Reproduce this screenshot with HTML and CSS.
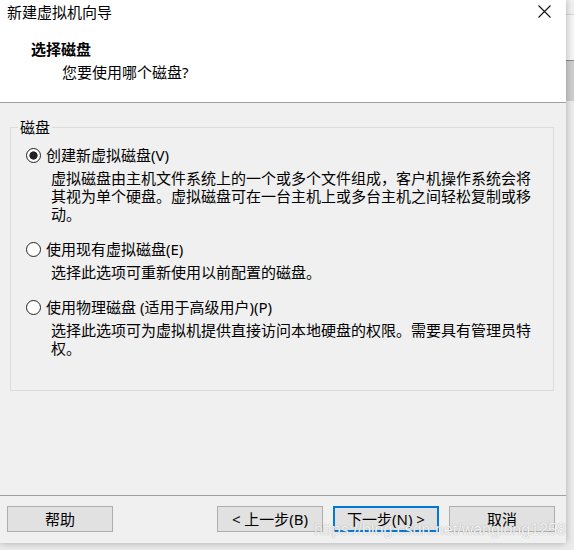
FILE: index.html
```html
<!DOCTYPE html>
<html lang="zh-CN">
<head>
<meta charset="utf-8">
<title>新建虚拟机向导</title>
<link rel="stylesheet" href="styles.css">
</head>
<body>
<div class="dialog">
  <div class="header">
    <div class="titlebar">
      <span class="title">新建虚拟机向导</span>
      <svg class="close" width="13" height="13" viewBox="0 0 13 13" aria-hidden="true">
        <path d="M0.5 0.5 L12.5 12.5 M12.5 0.5 L0.5 12.5" stroke="#111" stroke-width="1.1" fill="none"/>
      </svg>
    </div>
    <div class="h-title">选择磁盘</div>
    <div class="h-sub">您要使用哪个磁盘?</div>
  </div>

  <div class="main">
    <fieldset class="group">
      <legend>磁盘</legend>
      <div class="option">
        <div class="opt-row"><span class="radio checked"></span><span>创建新虚拟磁盘(V)</span></div>
        <div class="desc">虚拟磁盘由主机文件系统上的一个或多个文件组成，客户机操作系统会将其视为单个硬盘。虚拟磁盘可在一台主机上或多台主机之间轻松复制或移动。</div>
      </div>
      <div class="option">
        <div class="opt-row"><span class="radio"></span><span>使用现有虚拟磁盘(E)</span></div>
        <div class="desc">选择此选项可重新使用以前配置的磁盘。</div>
      </div>
      <div class="option">
        <div class="opt-row"><span class="radio"></span><span>使用物理磁盘 (适用于高级用户)(P)</span></div>
        <div class="desc">选择此选项可为虚拟机提供直接访问本地硬盘的权限。需要具有管理员特权。</div>
      </div>
    </fieldset>
  </div>

  <div class="footer">
    <button class="btn">帮助</button>
    <div class="nav">
      <button class="btn">&lt; 上一步(B)</button>
      <button class="btn default">下一步(N) &gt;</button>
      <button class="btn">取消</button>
    </div>
  </div>

  <div class="watermark">https://blog.csdn.net/wanglong1258</div>
</div>
</body>
</html>
```

FILE: styles.css
```css
html, body {
  margin: 0;
  padding: 0;
}
body {
  width: 574px;
  height: 550px;
  overflow: hidden;
  font-family: "Noto Sans", "Noto Sans CJK SC", sans-serif;
  font-size: 15px;
  color: #000;
  background: linear-gradient(to bottom,
    #f0f0f0 0, #f0f0f0 14px,
    #d6d6d6 14px, #d6d6d6 15px,
    #f4f4f4 15px, #f4f4f4 60px,
    #8c8c8c 60px, #8c8c8c 61px,
    #cdcdcd 61px, #cdcdcd 101px,
    #ebebeb 101px, #ebebeb 100%);
}
.dialog {
  position: relative;
  width: 566px;
  height: 543px;
  background: #f0f0f0;
  box-shadow: 0 0 7px rgba(0, 0, 0, 0.28);
  display: flex;
  flex-direction: column;
}
.header {
  height: 102px;
  background: #fff;
  border-bottom: 1px solid #a0a0a0;
  flex: none;
}
.titlebar {
  height: 24px;
  display: flex;
  justify-content: space-between;
  align-items: flex-start;
}
.title {
  line-height: 24px;
  padding-left: 7px;
}
.close {
  margin-top: 5px;
  margin-right: 15px;
}
.h-title {
  margin-top: 15px;
  margin-left: 31px;
  line-height: 20px;
  font-weight: bold;
}
.h-sub {
  margin-top: 3px;
  margin-left: 62px;
  line-height: 20px;
}
.main {
  flex: 1;
}
.group {
  margin: 15px 12px 0 10px;
  padding: 10px 7px 33px 7px;
  border: 1px solid #dcdcdc;
  min-width: 0;
}
.group legend {
  padding: 0 2px;
  line-height: 18px;
}
.option + .option {
  margin-top: 17px;
}
.opt-row {
  display: flex;
  align-items: center;
  gap: 5px;
  line-height: 18px;
  padding-left: 8px;
}
.radio {
  width: 15px;
  height: 15px;
  box-sizing: border-box;
  border: 1px solid #222;
  border-radius: 50%;
  background: #fff;
  flex: none;
}
.radio.checked {
  background: radial-gradient(circle, #222 0, #222 3.8px, #fff 4.4px);
}
.desc {
  margin-top: 5px;
  padding-left: 33px;
  width: 485px;
  line-height: 18px;
}
.footer {
  flex: none;
  border-top: 1px solid #a0a0a0;
  padding: 10px 11px 11px 7px;
  display: flex;
  justify-content: space-between;
}
.nav {
  display: flex;
  gap: 10px;
}
.btn {
  width: 106px;
  height: 26px;
  box-sizing: border-box;
  background: #e1e1e1;
  border: 1px solid #adadad;
  font: inherit;
  color: #000;
  padding: 0;
  line-height: 22px;
  margin: 0;
}
.btn.default {
  border: 2px solid #0078d7;
}
.watermark {
  position: absolute;
  left: 314px;
  top: 521px;
  font-family: "Liberation Sans", Arial, sans-serif;
  font-size: 16px;
  color: rgba(255, 255, 255, 0.9);
  text-shadow: 0 0 1px rgba(110, 110, 110, 0.7);
  white-space: nowrap;
  pointer-events: none;
}
```
